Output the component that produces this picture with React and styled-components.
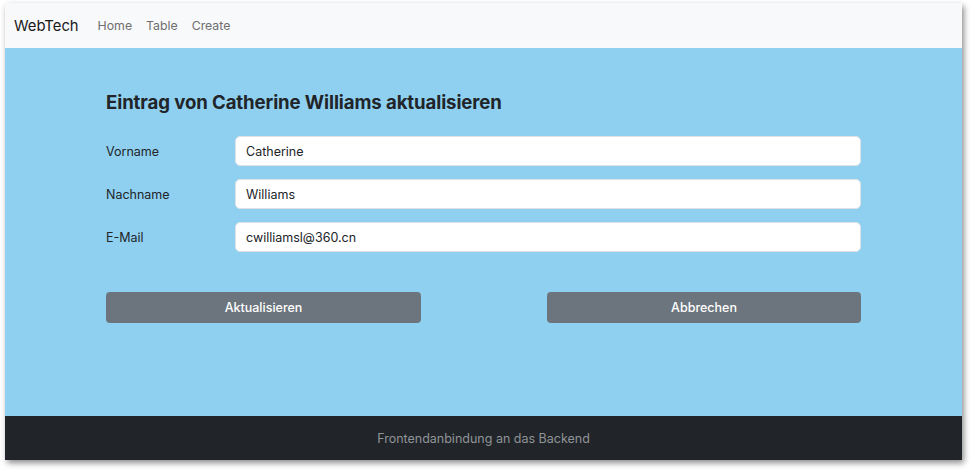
import styled, { createGlobalStyle } from "styled-components";

const GlobalStyle = createGlobalStyle`
  html, body {
    margin: 0;
    padding: 0;
    background: #ffffff;
  }
  body {
    font-family: Inter, "Noto Sans", "Liberation Sans", sans-serif;
  }
  * {
    box-sizing: border-box;
  }
`;

const Frame = styled.div`
  width: 976px;
  height: 474px;
  padding: 3px 14px 14px 5px;
`;

const Window = styled.div`
  width: 957px;
  height: 457px;
  display: flex;
  flex-direction: column;
  box-shadow: 2px 3px 6px rgba(0, 0, 0, 0.45);
`;

const Navbar = styled.nav`
  height: 45px;
  background: #f8f9fa;
  display: flex;
  align-items: center;
  padding: 0 9px;
`;

const Brand = styled.span`
  font-size: 14.8px;
  color: #1a1a1a;
  margin-right: 19px;
`;

const NavLink = styled.a`
  font-size: 12.3px;
  color: #6e6e6e;
  text-decoration: none;
  margin-right: 14px;
`;

const Main = styled.main`
  flex: 1;
  background: #8fd0f0;
  display: flex;
  justify-content: center;
`;

const Container = styled.div`
  width: 755px;
  padding-top: 43px;
`;

const Title = styled.h2`
  margin: 0 0 23px;
  font-size: 18.6px;
  font-weight: 700;
  color: #212529;
  letter-spacing: -0.1px;
`;

const FormRow = styled.div`
  display: grid;
  grid-template-columns: 129px 1fr;
  align-items: center;
  margin-bottom: 13px;
`;

const Label = styled.label`
  font-size: 12.5px;
  color: #212529;
`;

const Input = styled.input`
  height: 30px;
  width: 100%;
  border: 1px solid #dee2e6;
  border-radius: 5px;
  background: #fff;
  padding: 0 10px;
  font-family: inherit;
  font-size: 12.5px;
  color: #212529;
`;

const Buttons = styled.div`
  display: flex;
  justify-content: space-between;
  margin-top: 40px;
`;

const Button = styled.button`
  width: ${(p) => p.$w || 315}px;
  height: 31px;
  border: none;
  border-radius: 4px;
  background: #6c757d;
  color: #fff;
  font-family: inherit;
  font-size: 12.5px;
  font-weight: 500;
`;

const Footer = styled.footer`
  height: 44px;
  background: #212529;
  color: #909498;
  font-size: 12.5px;
  display: flex;
  align-items: center;
  justify-content: center;
`;

const fields = [
  { label: "Vorname", value: "Catherine" },
  { label: "Nachname", value: "Williams" },
  { label: "E-Mail", value: "cwilliamsl@360.cn" },
];

export default function App() {
  return (
    <>
      <GlobalStyle />
      <Frame>
        <Window>
          <Navbar>
            <Brand>WebTech</Brand>
            <NavLink href="#">Home</NavLink>
            <NavLink href="#">Table</NavLink>
            <NavLink href="#">Create</NavLink>
          </Navbar>
          <Main>
            <Container>
              <Title>Eintrag von Catherine Williams aktualisieren</Title>
              {fields.map((f) => (
                <FormRow key={f.label}>
                  <Label>{f.label}</Label>
                  <Input defaultValue={f.value} />
                </FormRow>
              ))}
              <Buttons>
                <Button>Aktualisieren</Button>
                <Button $w={314}>Abbrechen</Button>
              </Buttons>
            </Container>
          </Main>
          <Footer>Frontendanbindung an das Backend</Footer>
        </Window>
      </Frame>
    </>
  );
}
